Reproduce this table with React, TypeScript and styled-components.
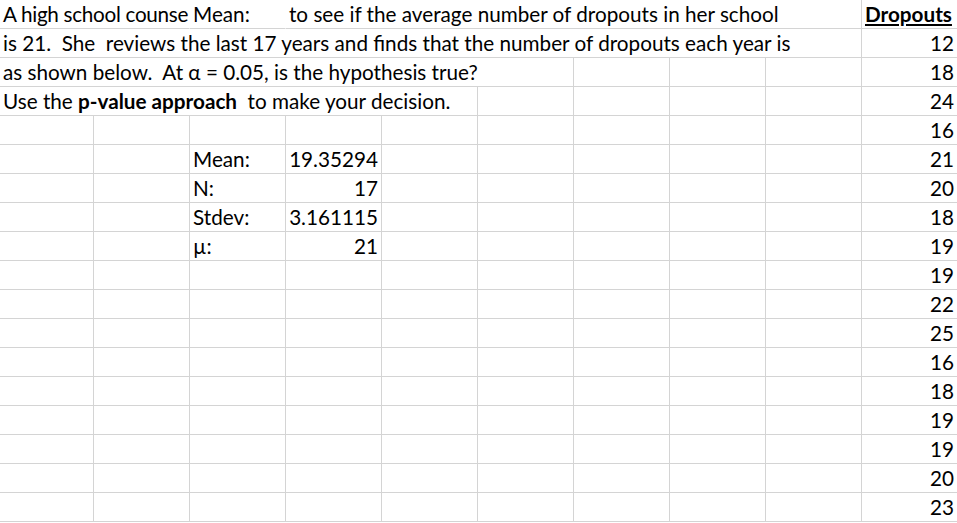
import React from "react";
import styled, { createGlobalStyle } from "styled-components";

const GlobalStyle = createGlobalStyle`
  html, body {
    margin: 0;
    padding: 0;
    background: #ffffff;
    overflow: hidden;
  }
`;

const dropouts = [12, 18, 24, 16, 21, 20, 18, 19, 19, 22, 25, 16, 18, 19, 19, 20, 23];

const stats: Record<number, [string, string]> = {
  6: ["Mean:", "19.35294"],
  7: ["N:", "17"],
  8: ["Stdev:", "3.161115"],
  9: ["µ:", "21"],
};

const App = () => {
  const rows: React.ReactNode[] = [];

  // row 1
  rows.push(
    <React.Fragment key="r1">
      <Cell $span={2} $open $tight>A high school counse</Cell>
      <Cell $open>Mean:</Cell>
      <Cell $span={6}>to see if the average number of dropouts in her school</Cell>
      <Cell>
        <Header>Dropouts</Header>
      </Cell>
    </React.Fragment>
  );

  // row 2
  rows.push(
    <React.Fragment key="r2">
      <Cell $span={9}>
        is 21.  She  reviews the last 17 years and finds that the number of dropouts each year is
      </Cell>
      <Cell $right>{dropouts[0]}</Cell>
    </React.Fragment>
  );

  // row 3
  rows.push(
    <React.Fragment key="r3">
      <Cell $span={6}>as shown below.  At α = 0.05, is the hypothesis true?</Cell>
      <Cell />
      <Cell />
      <Cell />
      <Cell $right>{dropouts[1]}</Cell>
    </React.Fragment>
  );

  // row 4
  rows.push(
    <React.Fragment key="r4">
      <Cell $span={5}>
        Use the <b>p-value approach</b>  to make your decision.
      </Cell>
      <Cell />
      <Cell />
      <Cell />
      <Cell />
      <Cell $right>{dropouts[2]}</Cell>
    </React.Fragment>
  );

  for (let r = 5; r <= 18; r++) {
    const s = stats[r];
    rows.push(
      <React.Fragment key={`r${r}`}>
        <Cell />
        <Cell />
        <Cell>{s ? s[0] : ""}</Cell>
        <Cell $right>{s ? s[1] : ""}</Cell>
        <Cell />
        <Cell />
        <Cell />
        <Cell />
        <Cell />
        <Cell $right>{dropouts[r - 2]}</Cell>
      </React.Fragment>
    );
  }

  return (
    <>
      <GlobalStyle />
      <Sheet>{rows}</Sheet>
    </>
  );
};

export default App;

const Sheet = styled.div`
  display: grid;
  grid-template-columns: 94px repeat(9, 96px);
  grid-auto-rows: 29px;
  width: 958px;

  font-family: Lato, "Open Sans", sans-serif;
  font-size: 20.7px;
  color: #000000;
`;

const Cell = styled.div<{ $span?: number; $right?: boolean; $open?: boolean; $tight?: boolean }>`
  grid-column: span ${(p) => p.$span ?? 1};
  box-sizing: border-box;
  border-bottom: 1px solid #d4d4d4;
  border-right: 1px solid ${(p) => (p.$open ? "transparent" : "#d4d4d4")};

  padding: 0 ${(p) => (p.$tight ? "0" : "3px")} 0 3px;
  letter-spacing: ${(p) => (p.$tight ? "-0.3px" : "normal")};
  line-height: 28px;
  white-space: pre;
  overflow: hidden;
  text-align: ${(p) => (p.$right ? "right" : "left")};
`;

const Header = styled.span`
  font-weight: 700;
  text-decoration: underline;
  text-decoration-thickness: 2px;
  text-underline-offset: 2px;
`;
